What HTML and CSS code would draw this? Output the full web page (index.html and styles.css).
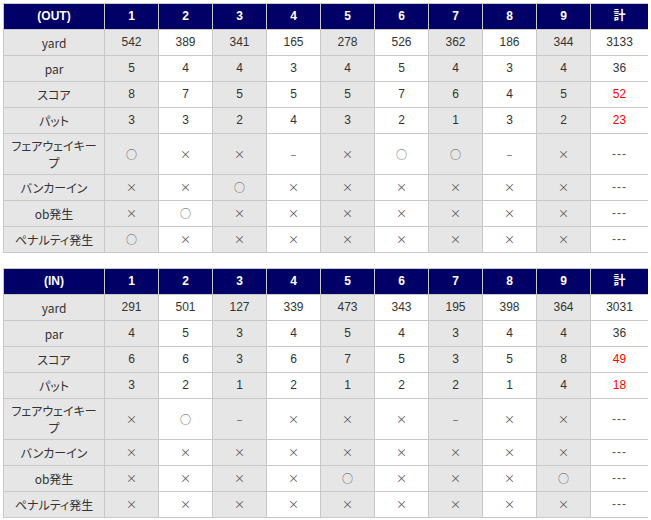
FILE: index.html
```html
<!DOCTYPE html>
<html lang="ja">
<head>
<meta charset="utf-8">
<link rel="stylesheet" href="styles.css">
</head>
<body>
<table class="score">
  <colgroup><col class="c-label"><col class="c-hole"><col class="c-hole"><col class="c-hole"><col class="c-hole"><col class="c-hole"><col class="c-hole"><col class="c-hole"><col class="c-hole"><col class="c-hole"><col class="c-total"></colgroup>
  <tr class="head"><th>(OUT)</th><th>1</th><th>2</th><th>3</th><th>4</th><th>5</th><th>6</th><th>7</th><th>8</th><th>9</th><th>計</th></tr>
  <tr><td class="lbl">yard</td><td>542</td><td>389</td><td>341</td><td>165</td><td>278</td><td>526</td><td>362</td><td>186</td><td>344</td><td>3133</td></tr>
  <tr><td class="lbl">par</td><td>5</td><td>4</td><td>4</td><td>3</td><td>4</td><td>5</td><td>4</td><td>3</td><td>4</td><td>36</td></tr>
  <tr><td class="lbl">スコア</td><td>8</td><td>7</td><td>5</td><td>5</td><td>5</td><td>7</td><td>6</td><td>4</td><td>5</td><td class="red">52</td></tr>
  <tr><td class="lbl">パット</td><td>3</td><td>3</td><td>2</td><td>4</td><td>3</td><td>2</td><td>1</td><td>3</td><td>2</td><td class="red">23</td></tr>
  <tr><td class="lbl two">フェアウェイキー<br>プ</td><td class="m">○</td><td class="m">×</td><td class="m">×</td><td class="m">–</td><td class="m">×</td><td class="m">○</td><td class="m">○</td><td class="m">–</td><td class="m">×</td><td class="nil">---</td></tr>
  <tr><td class="lbl">バンカーイン</td><td class="m">×</td><td class="m">×</td><td class="m">○</td><td class="m">×</td><td class="m">×</td><td class="m">×</td><td class="m">×</td><td class="m">×</td><td class="m">×</td><td class="nil">---</td></tr>
  <tr><td class="lbl">ob発生</td><td class="m">×</td><td class="m">○</td><td class="m">×</td><td class="m">×</td><td class="m">×</td><td class="m">×</td><td class="m">×</td><td class="m">×</td><td class="m">×</td><td class="nil">---</td></tr>
  <tr><td class="lbl">ペナルティ発生</td><td class="m">○</td><td class="m">×</td><td class="m">×</td><td class="m">×</td><td class="m">×</td><td class="m">×</td><td class="m">×</td><td class="m">×</td><td class="m">×</td><td class="nil">---</td></tr>
</table>
<table class="score second">
  <colgroup><col class="c-label"><col class="c-hole"><col class="c-hole"><col class="c-hole"><col class="c-hole"><col class="c-hole"><col class="c-hole"><col class="c-hole"><col class="c-hole"><col class="c-hole"><col class="c-total"></colgroup>
  <tr class="head"><th>(IN)</th><th>1</th><th>2</th><th>3</th><th>4</th><th>5</th><th>6</th><th>7</th><th>8</th><th>9</th><th>計</th></tr>
  <tr><td class="lbl">yard</td><td>291</td><td>501</td><td>127</td><td>339</td><td>473</td><td>343</td><td>195</td><td>398</td><td>364</td><td>3031</td></tr>
  <tr><td class="lbl">par</td><td>4</td><td>5</td><td>3</td><td>4</td><td>5</td><td>4</td><td>3</td><td>4</td><td>4</td><td>36</td></tr>
  <tr><td class="lbl">スコア</td><td>6</td><td>6</td><td>3</td><td>6</td><td>7</td><td>5</td><td>3</td><td>5</td><td>8</td><td class="red">49</td></tr>
  <tr><td class="lbl">パット</td><td>3</td><td>2</td><td>1</td><td>2</td><td>1</td><td>2</td><td>2</td><td>1</td><td>4</td><td class="red">18</td></tr>
  <tr><td class="lbl two">フェアウェイキー<br>プ</td><td class="m">×</td><td class="m">○</td><td class="m">–</td><td class="m">×</td><td class="m">×</td><td class="m">×</td><td class="m">–</td><td class="m">×</td><td class="m">×</td><td class="nil">---</td></tr>
  <tr><td class="lbl">バンカーイン</td><td class="m">×</td><td class="m">×</td><td class="m">×</td><td class="m">×</td><td class="m">×</td><td class="m">×</td><td class="m">×</td><td class="m">×</td><td class="m">×</td><td class="nil">---</td></tr>
  <tr><td class="lbl">ob発生</td><td class="m">×</td><td class="m">×</td><td class="m">×</td><td class="m">×</td><td class="m">○</td><td class="m">×</td><td class="m">×</td><td class="m">×</td><td class="m">○</td><td class="nil">---</td></tr>
  <tr><td class="lbl">ペナルティ発生</td><td class="m">×</td><td class="m">×</td><td class="m">×</td><td class="m">×</td><td class="m">×</td><td class="m">×</td><td class="m">×</td><td class="m">×</td><td class="m">×</td><td class="nil">---</td></tr>
</table>
</body>
</html>
```

FILE: styles.css
```css
html, body {
  background: #ffffff;
}
body {
  margin: 3px;
  font-family: "Liberation Sans", "Noto Sans CJK JP", sans-serif;
  font-size: 12px;
  color: #333333;
}
.score {
  border-collapse: collapse;
  table-layout: fixed;
  width: 645px;
  border: 1px solid #c8c8c8;
}
.second {
  margin-top: 15px;
}
.c-label { width: 101px; }
.c-hole { width: 54px; }
.c-total { width: 58px; }
.score th,
.score td {
  border: 1px solid #c8c8c8;
  padding: 4px 2px;
  line-height: 17px;
  text-align: center;
  vertical-align: middle;
  font-weight: normal;
}
.score td:nth-child(even) {
  background: #e6e6e6;
}
.score td:nth-child(odd) {
  background: #ffffff;
}
.score td.lbl {
  background: #e6e6e6;
  font-family: "Noto Sans CJK JP", "Liberation Sans", sans-serif;
  font-feature-settings: "palt";
  font-size: 12px;
  color: #333333;
}
.score td.two {
  padding: 3px 2px;
}
.score .head th {
  background: #000066;
  color: #ffffff;
  font-weight: bold;
  font-family: "Liberation Sans", "Noto Sans CJK JP", sans-serif;
}
.score td.red {
  color: #ff0000;
}
.score td.m {
  font-family: "Noto Sans CJK JP", sans-serif;
  font-size: 11px;
  color: #555555;
}
.score td.nil {
  letter-spacing: 1px;
  color: #555555;
}
```
